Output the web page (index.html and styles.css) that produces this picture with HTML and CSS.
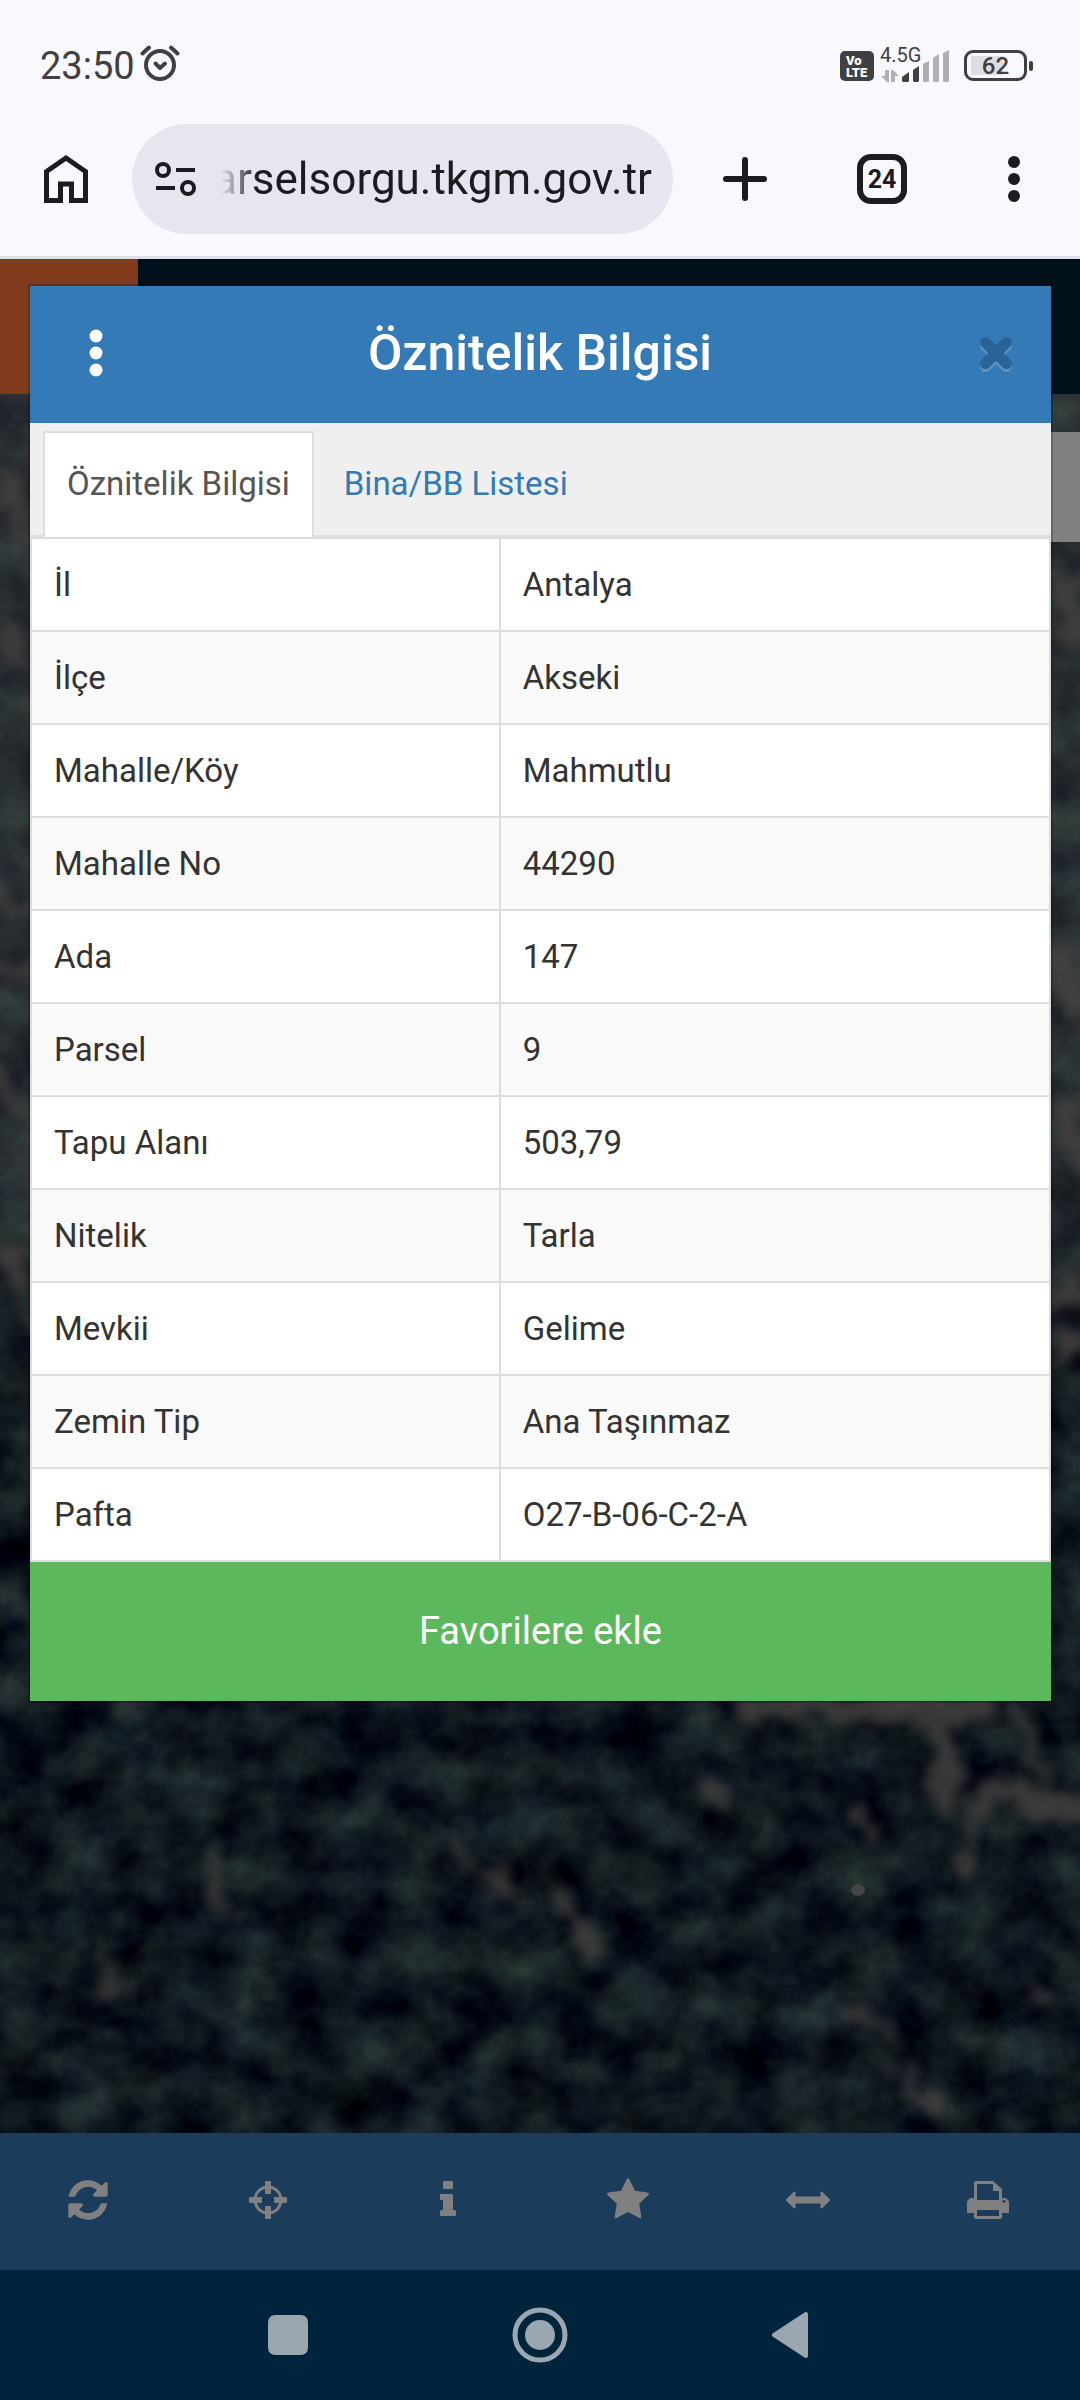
FILE: index.html
```
<!DOCTYPE html>
<html lang="tr">
<head>
  <meta charset="UTF-8">
  <meta name="viewport" content="width=device-width, initial-scale=1.0">
  <title>Parsel Sorgu</title>
  <link rel="stylesheet" href="styles.css">
</head>
<body>
  <div class="status-bar">
    <div class="status-left">
      <span class="clock">23:50</span>
      <svg class="alarm" width="40" height="40" viewBox="0 0 40 40" fill="none" stroke="#404042" stroke-width="4" stroke-linecap="round">
        <circle cx="20" cy="22" r="14"/>
        <path d="M15.500 20.500l4.500 4.500 5-4.500" stroke-linejoin="round"/>
        <path d="M2.500 10.500l6.500-6M37.500 10.500l-6.500-6"/>
      </svg>
    </div>
    <div class="status-right">
      <span class="volte">Vo<br>LTE</span>
      <div class="network">
        <span class="network-type">4.5G</span>
        <svg width="70" height="36" viewBox="0 0 70 36">
          <g fill="#b0afb5">
            <path d="M9 22v12H7l-6-6h4v-6zM11 34V22h2l6 6h-4v6z"/>
            <path d="M43 16l6-3v19.500a1.500 1.500 0 0 1-1.500 1.500h-3a1.500 1.500 0 0 1-1.500-1.500zM53 10l6-4v26.500a1.500 1.500 0 0 1-1.500 1.500h-3a1.500 1.500 0 0 1-1.500-1.500zM63 5l6-3v30.500a1.500 1.500 0 0 1-1.500 1.500h-3a1.500 1.500 0 0 1-1.500-1.500z"/>
          </g>
          <path fill="#404042" d="M22 29l7-5v8.500a1.500 1.500 0 0 1-1.500 1.500h-4a1.500 1.500 0 0 1-1.500-1.500zM33 22l6-4v14.500a1.500 1.500 0 0 1-1.500 1.500h-3a1.500 1.500 0 0 1-1.500-1.500z"/>
        </svg>
      </div>
      <div class="battery"><span>62</span></div>
    </div>
  </div>

  <div class="browser-bar">
    <button class="bar-btn" aria-label="Ana sayfa">
      <svg width="48" height="52" viewBox="0 0 48 52" fill="none" stroke="#1c1b1f" stroke-width="5">
        <path d="M4.500 47.500V18.500L24 5l19.500 13.500v29H29.500V31h-11v16.500z"/>
      </svg>
    </button>
    <div class="address">
      <svg width="44" height="40" viewBox="0 0 44 40" fill="none" stroke="#1c1b1f" stroke-width="4">
        <circle cx="10" cy="11" r="6"/>
        <path d="M23 11h19M3 29h19"/>
        <circle cx="35" cy="29" r="6"/>
      </svg>
      <input class="url" type="text" aria-label="Adres" value="parselsorgu.tkgm.gov.tr">
    </div>
    <button class="bar-btn" aria-label="Yeni sekme">
      <svg width="48" height="48" viewBox="0 0 48 48" stroke="#1c1b1f" stroke-width="6" stroke-linecap="round">
        <path d="M24 5v38M5 24h38"/>
      </svg>
    </button>
    <button class="bar-btn" aria-label="Sekmeler"><span class="tab-count">24</span></button>
    <button class="bar-btn" aria-label="Menü">
      <svg width="12" height="46" viewBox="0 0 12 46" fill="#1c1b1f">
        <circle cx="6" cy="6" r="6"/><circle cx="6" cy="23" r="6"/><circle cx="6" cy="40" r="6"/>
      </svg>
    </button>
  </div>

  <main class="page">
    <div class="site-header"><div class="site-logo"></div></div>

    <div class="map">
      <svg viewBox="0 0 1080 1739" preserveAspectRatio="xMidYMid slice">
        <defs>
          <filter id="forest" x="0" y="0" width="100%" height="100%" color-interpolation-filters="sRGB">
            <feTurbulence type="fractalNoise" baseFrequency="0.018 0.022" numOctaves="5" seed="7"/>
            <feColorMatrix values="0.04 0.26 0 0 -0.09  0.03 0.32 0 0 -0.085  0 0.25 0.04 0 -0.03  0 0 0 0 1"/>
          </filter>
          <filter id="soil" x="-20%" y="-20%" width="140%" height="140%">
            <feTurbulence type="fractalNoise" baseFrequency="0.035" numOctaves="3" seed="3"/>
            <feDisplacementMap in="SourceGraphic" scale="50" xChannelSelector="R" yChannelSelector="G"/>
            <feGaussianBlur stdDeviation="6"/>
          </filter>
          <linearGradient id="fields" x2="0" y2="1">
            <stop offset="0" stop-color="#5a5c5a" stop-opacity=".35"/>
            <stop offset=".45" stop-color="#5a5c5a" stop-opacity=".3"/>
            <stop offset=".6" stop-color="#5a5c5a" stop-opacity="0"/>
          </linearGradient>
        </defs>
        <rect width="1080" height="1739" filter="url(#forest)"/>
        <rect width="1080" height="1739" fill="url(#fields)"/>
        <g filter="url(#soil)" fill="none" stroke="#464341" stroke-linecap="round" opacity=".8">
          <path stroke-width="26" d="M745 1312h230M935 1330l12 75M985 1395l85 20"/>
          <path stroke-width="14" d="M975 1410l-10 70M455 1450l55 50M560 1510l35 40M900 1680l40 40M1025 1320l12 60M855 1415l15 30"/>
          <path stroke-width="10" d="M120 1325l15-25M205 1455l20 70M100 1560l15 40M700 1390l35 30M850 1620l40 20M1030 1580l15 30"/>
          <path stroke-width="20" d="M5 95l15 50M0 240l25 30M0 500l30 20M0 570l30 10M0 680l20 40M0 860l25 20"/>
          <path stroke-width="24" d="M1060 180l20 60M1058 560l20 60M1060 720l20 60M1060 900h20M1060 955h20"/>
        </g>
        <ellipse cx="858" cy="1496" rx="7" ry="6" fill="#45444c"/>
      </svg>
      <div class="side-panel"></div>
    </div>

    <nav class="toolbar">
      <button aria-label="Yenile">
        <svg width="40" height="46" viewBox="0 0 1536 1792"><path d="M1511 1056q0 5-1 7-64 268-268 434.500t-478 166.500q-146 0-282.500-55t-243.500-157l-129 129q-19 19-45 19t-45-19-19-45v-448q0-26 19-45t45-19h448q26 0 45 19t19 45-19 45l-137 137q71 66 161 102t187 36q134 0 250-65t186-179q11-17 53-117 8-23 30-23h192q13 0 22.500 9.500t9.500 22.500zm25-800v448q0 26-19 45t-45 19h-448q-26 0-45-19t-19-45 19-45l138-138q-148-137-349-137-134 0-250 65t-186 179q-11 17-53 117-8 23-30 23h-199q-13 0-22.500-9.500t-9.500-22.500v-7q65-268 270-434.500t480-166.500q146 0 284 55.500t245 156.500l130-129q19-19 45-19t45 19 19 45z"/></svg>
      </button>
      <button aria-label="Konum">
        <svg width="46" height="46" viewBox="-23 -23 46 46">
          <circle r="13" fill="none" stroke="#808080" stroke-width="3"/>
          <rect x="-3" y="-19" width="6" height="13" rx="1"/><rect x="-3" y="6" width="6" height="13" rx="1"/>
          <rect x="-19" y="-3" width="13" height="6" rx="1"/><rect x="6" y="-3" width="13" height="6" rx="1"/>
        </svg>
      </button>
      <button aria-label="Bilgi">
        <svg width="46" height="46" viewBox="-23 -23 46 46">
          <rect x="-5" y="-19" width="10" height="8" rx="1"/>
          <path d="M-7-6H4a1 1 0 0 1 1 1V10H7a1 1 0 0 1 1 1v4a1 1 0 0 1-1 1H-7a1 1 0 0 1-1-1v-4a1 1 0 0 1 1-1h2V0h-2a1 1 0 0 1-1-1v-4a1 1 0 0 1 1-1z"/>
        </svg>
      </button>
      <button aria-label="Favoriler">
        <svg width="42" height="46" viewBox="0 0 1664 1792"><path d="M1664 647q0 22-26 48l-363 354 86 500q1 7 1 20 0 21-10.500 35.500t-30.500 14.500q-19 0-40-12l-449-236-449 236q-22 12-40 12-21 0-31.500-14.500t-10.500-35.500q0-6 2-20l86-500-364-354q-25-27-25-48 0-37 56-46l502-73 225-455q19-41 49-41t49 41l225 455 502 73q56 9 56 46z"/></svg>
      </button>
      <button aria-label="Ölçüm">
        <svg width="46" height="46" viewBox="-23 -23 46 46">
          <path d="M-22 0l8-8h1v5h26v-5h1l8 8-8 8h-1V3h-26v5h-1z" stroke="#808080" stroke-width="1" stroke-linejoin="round"/>
        </svg>
      </button>
      <button aria-label="Yazdır">
        <svg width="46" height="46" viewBox="-23 -23 46 46">
          <path fill-rule="evenodd" d="M-14-17a2 2 0 0 1 2-2H5l9 8v9h2a5 5 0 0 1 5 5v10h-7v4a2 2 0 0 1-2 2h-24a2 2 0 0 1-2-2v-4h-7V3a5 5 0 0 1 5-5h2zM-11-16V0h22v-9H5v-7zM-11 10v6h22v-6zM16 0a1.500 1.500 0 1 0 .1 0z"/>
        </svg>
      </button>
    </nav>

    <section class="modal" role="dialog" aria-labelledby="modal-title">
      <header class="modal-header">
        <button class="modal-menu" aria-label="Seçenekler">
          <svg width="14" height="48" viewBox="0 0 14 48" fill="#fff">
            <circle cx="7" cy="7" r="6.500"/><circle cx="7" cy="24" r="6.500"/><circle cx="7" cy="41" r="6.500"/>
          </svg>
        </button>
        <h1 id="modal-title">Öznitelik Bilgisi</h1>
        <button class="modal-close" aria-label="Kapat">
          <svg width="36" height="40" viewBox="0 0 36 40" stroke-width="11" stroke-linecap="round" fill="none">
            <path stroke="#5d94c6" d="M7.500 12.500l21 21M28.500 12.500l-21 21"/>
            <path stroke="#2a6496" d="M7.500 9.500l21 21M28.500 9.500l-21 21"/>
          </svg>
        </button>
      </header>

      <div class="tabs">
        <a class="tab active" href="#oznitelik">Öznitelik Bilgisi</a>
        <a class="tab" href="#bina">Bina/BB Listesi</a>
      </div>

      <table class="info">
        <tbody>
          <tr><td>İl</td><td>Antalya</td></tr>
          <tr><td>İlçe</td><td>Akseki</td></tr>
          <tr><td>Mahalle/Köy</td><td>Mahmutlu</td></tr>
          <tr><td>Mahalle No</td><td>44290</td></tr>
          <tr><td>Ada</td><td>147</td></tr>
          <tr><td>Parsel</td><td>9</td></tr>
          <tr><td>Tapu Alanı</td><td>503,79</td></tr>
          <tr><td>Nitelik</td><td>Tarla</td></tr>
          <tr><td>Mevkii</td><td>Gelime</td></tr>
          <tr><td>Zemin Tip</td><td>Ana Taşınmaz</td></tr>
          <tr><td>Pafta</td><td>O27-B-06-C-2-A</td></tr>
        </tbody>
      </table>

      <button class="favorite">Favorilere ekle</button>
    </section>
  </main>

  <div class="system-nav">
    <button aria-label="Son uygulamalar">
      <svg width="40" height="40" viewBox="0 0 40 40"><rect width="40" height="40" rx="7"/></svg>
    </button>
    <button aria-label="Ana ekran">
      <svg width="56" height="56" viewBox="0 0 56 56">
        <circle cx="28" cy="28" r="25" fill="none" stroke="#9aa7b0" stroke-width="5"/>
        <circle cx="28" cy="28" r="15"/>
      </svg>
    </button>
    <button aria-label="Geri">
      <svg width="40" height="48" viewBox="0 0 40 48"><path d="M2 24L34 3v42z" stroke="#9aa7b0" stroke-width="4" stroke-linejoin="round"/></svg>
    </button>
  </div>
</body>
</html>
```
FILE: styles.css
```
* {
  margin: 0;
  padding: 0;
  box-sizing: border-box;
}

body {
  font-family: Roboto, "Noto Sans", sans-serif;
  display: flex;
  flex-direction: column;
  min-height: 100vh;
  background-color: #f9f8fe;
}

button {
  font: inherit;
  border: none;
  background: none;
  cursor: pointer;
  display: flex;
  justify-content: center;
  align-items: center;
}

svg {
  display: block;
  flex: none;
}

/* Phone status bar */
.status-bar {
  display: flex;
  justify-content: space-between;
  align-items: center;
  height: 124px;
  padding: 7px 53px 0 40px;
  color: #404042;
}

.status-left,
.status-right {
  display: flex;
  align-items: center;
}

.status-left {
  gap: 5px;
}

.clock {
  font-size: 38px;
}

.alarm {
  margin-bottom: 5px;
}

.volte {
  width: 34px;
  height: 30px;
  padding: 4px 0 0 6px;
  border-radius: 5px;
  background-color: #404042;
  color: #fff;
  font-size: 13px;
  line-height: 12px;
  font-weight: 900;
}

.network {
  position: relative;
  margin: 0 14px 0 6px;
}

.network-type {
  position: absolute;
  top: -5px;
  left: 0;
  font-size: 20px;
  line-height: 24px;
}

.battery {
  position: relative;
  width: 63px;
  height: 31px;
  border: 3px solid #404042;
  border-radius: 9px;
  background: linear-gradient(#dedde3, #dedde3) 4px center / 32px 19px no-repeat;
  font-size: 24px;
  line-height: 26px;
  font-weight: 500;
  text-align: center;
}

.battery::after {
  content: "";
  position: absolute;
  top: 8px;
  right: -9px;
  width: 4px;
  height: 10px;
  border-radius: 2px;
  background-color: #404042;
}

/* Browser toolbar */
.browser-bar {
  display: grid;
  grid-template-columns: 132px 1fr 144px 130px 133px;
  padding-bottom: 22px;
  border-bottom: 3px solid #e1e0e8;
}

.address {
  display: flex;
  align-items: center;
  gap: 20px;
  height: 110px;
  padding: 0 21px;
  border-radius: 55px;
  background-color: #e7e5f0;
  min-width: 0;
}

.url {
  flex: 1;
  min-width: 0;
  border: none;
  outline: none;
  background: none;
  color: #1c1b1f;
  font: 44px Roboto, "Noto Sans", sans-serif;
  /* keep the end of the address in view and fade out its start */
  direction: rtl;
  mask-image: linear-gradient(to right, transparent 4px, #000 40px);
}

.tab-count {
  width: 50px;
  height: 50px;
  border: 6px solid #1c1b1f;
  border-radius: 14px;
  color: #1c1b1f;
  font-size: 25px;
  line-height: 39px;
  font-weight: 700;
}

/* Page behind the dialog */
.page {
  position: relative;
  flex: 1;
  display: flex;
  flex-direction: column;
}

.site-header {
  height: 135px;
  background-color: #00111c;
}

.site-logo {
  width: 138px;
  height: 100%;
  background-color: #7f3b1c;
}

.map {
  position: relative;
  flex: 1;
  overflow: hidden;
  background-color: #0c141a;
}

.map svg {
  position: absolute;
  width: 100%;
  height: 100%;
}

.side-panel {
  position: absolute;
  top: 38px;
  right: 0;
  width: 120px;
  height: 110px;
  background-color: #808080;
}

.toolbar {
  display: grid;
  grid-template-columns: repeat(6, 1fr);
  height: 137px;
  background-color: #1b3d5b;
}

.toolbar button {
  padding: 0 5px 3px 0;
}

.toolbar svg {
  fill: #808080;
}

/* Dialog */
.modal {
  position: absolute;
  top: 27px;
  left: 30px;
  right: 29px;
  background-color: #fff;
  box-shadow: 0 0 0 2px rgba(0, 0, 0, 0.2);
}

.modal-header {
  display: grid;
  grid-template-columns: 132px 1fr 110px;
  height: 137px;
  padding-bottom: 4px;
  background-color: #337ab7;
}

.modal-header h1 {
  align-self: center;
  padding-right: 23px;
  text-align: center;
  color: #fff;
  font-size: 50px;
  line-height: 56px;
  font-weight: 500;
}

.tabs {
  display: flex;
  gap: 6px;
  padding: 8px 13px 0;
  background-color: #efefef;
  border-bottom: 2px solid #ddd;
}

.tab {
  padding: 29px 22px 31px;
  border: 2px solid transparent;
  border-bottom: none;
  margin-bottom: -2px;
  color: #337ab7;
  font-size: 33px;
  line-height: 44px;
  text-decoration: none;
}

.tab.active {
  color: #555;
  background-color: #fff;
  border-color: #ddd;
}

.info {
  width: 100%;
  border-collapse: collapse;
  color: #333;
  font-size: 33px;
  line-height: 47px;
}

.info td {
  border: 2px solid #ddd;
  padding: 22px;
}

.info td:first-child {
  width: 46%;
}

.info tr:nth-child(even) {
  background-color: #f9f9f9;
}

.favorite {
  width: 100%;
  height: 139px;
  padding-bottom: 2px;
  background-color: #5cb85c;
  color: #fff;
  font-size: 38px;
}

/* Phone navigation buttons */
.system-nav {
  display: flex;
  justify-content: center;
  height: 130px;
  background-color: #00243c;
}

.system-nav button {
  width: 252px;
}

.system-nav svg {
  fill: #9aa7b0;
}
```
